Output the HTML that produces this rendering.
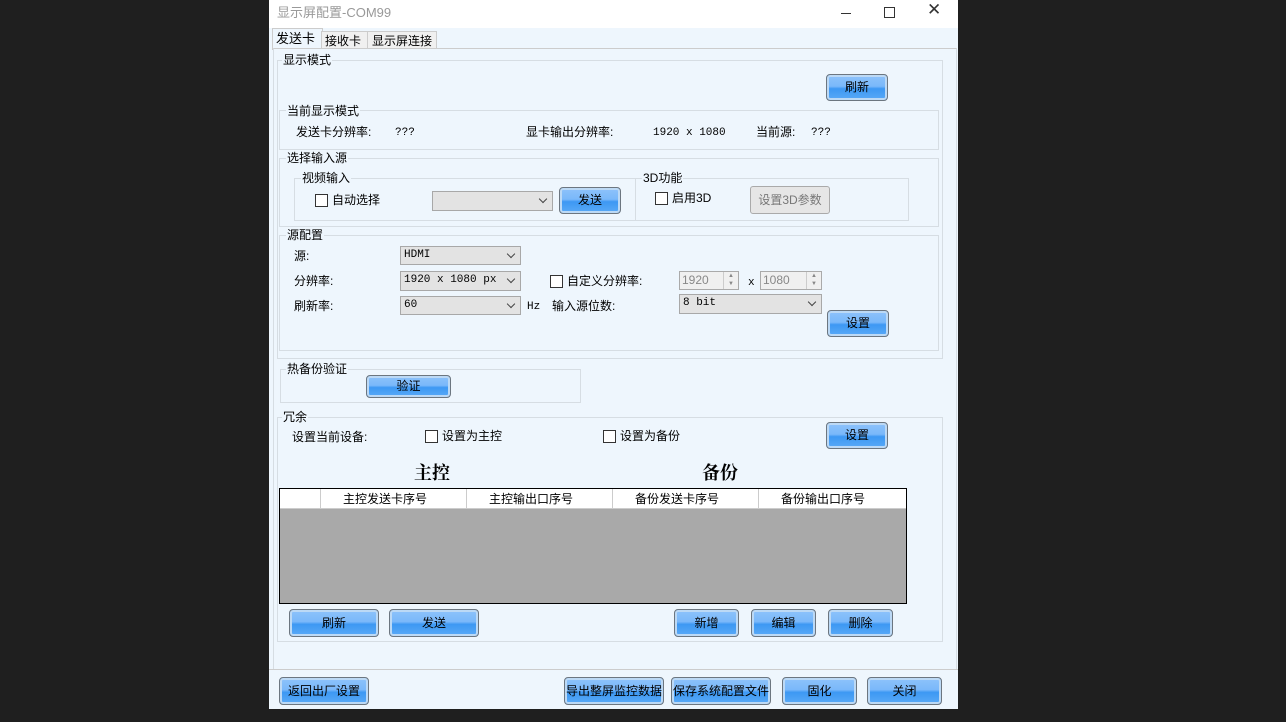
<!DOCTYPE html>
<html><head><meta charset="utf-8"><style>
body{margin:0;width:1286px;height:722px;background:#1f1f1f;position:relative;overflow:hidden;font-family:"Liberation Sans","Noto Sans CJK SC",sans-serif;font-size:12px;color:#000}
.a{position:absolute}
.win{left:269px;top:0;width:689px;height:709px;background:#eef6fd}
.title{left:0;top:0;width:689px;height:28px;background:#fff}
.g{position:absolute;border:1px solid #d6dde3}
.lg{position:absolute;background:#eef6fd;padding:0 1px;font-size:12px;line-height:14px}
.btn{position:absolute;border:1px solid #6c7680;border-radius:4px;background:linear-gradient(#8ec3fb 0%,#7ab8fa 45%,#3d98f3 55%,#5aaaf7 100%);box-shadow:inset 0 0 0 2px #bcd9f5;text-align:center;font-size:12px;box-sizing:border-box}
.cb{position:absolute;width:11px;height:11px;border:1px solid #333;background:#fff}
.sel{position:absolute;border:1px solid #a8a8a8;background:#e3e3e3;box-sizing:border-box;font-family:"Liberation Mono","Noto Sans CJK SC",monospace;font-size:11px;padding-left:3px;line-height:17px}
.sel:after{content:"";position:absolute;right:6px;top:4px;width:5px;height:5px;border-right:1px solid #444;border-bottom:1px solid #444;transform:rotate(45deg)}
.t{position:absolute;white-space:nowrap;line-height:14px}
.m{font-family:"Liberation Mono","Noto Sans CJK SC",monospace;font-size:11px}
</style></head><body>
<div class="a win">
 <div class="a title"><span class="t" style="left:8px;top:6px;color:#999;font-size:13px">显示屏配置-COM99</span>
  <div class="a" style="left:572px;top:13px;width:10px;height:1px;background:#333"></div>
  <div class="a" style="left:615px;top:7px;width:9px;height:9px;border:1px solid #333"></div>
  <span class="t" style="left:658px;top:3px;font-size:17px;color:#333">✕</span>
 </div>
 <!-- tabs -->
 <div class="a" style="left:3px;top:28px;width:49px;height:21px;background:#eef6fd;border:1px solid #ccc;border-bottom:none"></div>
 <span class="t" style="left:7px;top:32px;font-size:13px">发送卡</span>
 <div class="a" style="left:52px;top:31px;width:45px;height:17px;background:#f0f0f0;border:1px solid #ccc"></div>
 <span class="t" style="left:56px;top:34px">接收卡</span>
 <div class="a" style="left:98px;top:31px;width:68px;height:17px;background:#f0f0f0;border:1px solid #ccc"></div>
 <span class="t" style="left:103px;top:34px">显示屏连接</span>
 <div class="a" style="left:4px;top:48px;width:682px;height:620px;border:1px solid #d6dde3;border-top:1px solid #ccc;background:#eef6fd"></div>

 <!-- 显示模式 -->
 <div class="g" style="left:8px;top:60px;width:664px;height:297px"></div>
 <span class="lg" style="left:13px;top:53px">显示模式</span>
 <div class="btn" style="left:557px;top:74px;width:62px;height:27px;line-height:25px">刷新</div>
 <div class="g" style="left:10px;top:110px;width:658px;height:38px"></div>
 <span class="lg" style="left:17px;top:104px">当前显示模式</span>
 <span class="t" style="left:27px;top:125px">发送卡分辨率:</span><span class="t m" style="left:126px;top:126px">???</span>
 <span class="t" style="left:257px;top:125px">显卡输出分辨率:</span><span class="t m" style="left:384px;top:126px">1920 x 1080</span>
 <span class="t" style="left:487px;top:125px">当前源:</span><span class="t m" style="left:542px;top:126px">???</span>

 <div class="g" style="left:10px;top:158px;width:658px;height:67px"></div>
 <span class="lg" style="left:17px;top:151px">选择输入源</span>
 <div class="g" style="left:25px;top:178px;width:340px;height:41px"></div>
 <span class="lg" style="left:32px;top:171px">视频输入</span>
 <div class="cb" style="left:46px;top:194px"></div><span class="t" style="left:63px;top:193px">自动选择</span>
 <div class="sel" style="left:163px;top:191px;width:121px;height:20px"></div>
 <div class="btn" style="left:290px;top:187px;width:62px;height:27px;line-height:25px">发送</div>
 <div class="g" style="left:366px;top:178px;width:272px;height:41px"></div>
 <span class="lg" style="left:373px;top:171px">3D功能</span>
 <div class="cb" style="left:386px;top:192px"></div><span class="t" style="left:403px;top:191px">启用3D</span>
 <div class="a" style="left:481px;top:186px;width:78px;height:26px;border:1px solid #aaa;border-radius:3px;background:#e6e6e6;color:#777;text-align:center;line-height:26px">设置3D参数</div>

 <div class="g" style="left:10px;top:235px;width:658px;height:114px"></div>
 <span class="lg" style="left:17px;top:228px">源配置</span>
 <span class="t" style="left:25px;top:249px">源:</span>
 <div class="sel" style="left:131px;top:246px;width:121px;height:19px">HDMI</div>
 <span class="t" style="left:25px;top:274px">分辨率:</span>
 <div class="sel" style="left:131px;top:271px;width:121px;height:20px">1920 x 1080 px</div>
 <span class="t" style="left:25px;top:299px">刷新率:</span>
 <div class="sel" style="left:131px;top:296px;width:121px;height:19px">60</div>
 <span class="t m" style="left:258px;top:300px">Hz</span>
 <div class="cb" style="left:281px;top:275px"></div><span class="t" style="left:298px;top:274px">自定义分辨率:</span>
 <div class="a" style="left:410px;top:271px;width:60px;height:19px;border:1px solid #aaa;background:#f0f0f0;color:#888;line-height:17px;padding-left:2px;box-sizing:border-box">1920<span style="position:absolute;right:0;top:0;width:14px;height:17px;border-left:1px solid #ccc;font-size:6px;line-height:8px;text-align:center">▲<br>▼</span></div>
 <span class="t m" style="left:479px;top:276px">x</span>
 <div class="a" style="left:491px;top:271px;width:62px;height:19px;border:1px solid #aaa;background:#f0f0f0;color:#888;line-height:17px;padding-left:2px;box-sizing:border-box">1080<span style="position:absolute;right:0;top:0;width:14px;height:17px;border-left:1px solid #ccc;font-size:6px;line-height:8px;text-align:center">▲<br>▼</span></div>
 <span class="t" style="left:283px;top:299px">输入源位数:</span>
 <div class="sel" style="left:410px;top:294px;width:143px;height:20px">8 bit</div>
 <div class="btn" style="left:558px;top:310px;width:62px;height:27px;line-height:25px">设置</div>

 <div class="g" style="left:11px;top:369px;width:299px;height:32px"></div>
 <span class="lg" style="left:17px;top:362px">热备份验证</span>
 <div class="btn" style="left:97px;top:375px;width:85px;height:23px;line-height:21px">验证</div>

 <div class="g" style="left:8px;top:417px;width:664px;height:223px"></div>
 <span class="lg" style="left:13px;top:410px">冗余</span>
 <span class="t" style="left:23px;top:430px">设置当前设备:</span>
 <div class="cb" style="left:156px;top:430px"></div><span class="t" style="left:173px;top:429px">设置为主控</span>
 <div class="cb" style="left:334px;top:430px"></div><span class="t" style="left:351px;top:429px">设置为备份</span>
 <div class="btn" style="left:557px;top:422px;width:62px;height:27px;line-height:25px">设置</div>
 <span class="t" style="left:145px;top:462px;font-family:'Noto Serif CJK SC',serif;font-weight:bold;font-size:18px;line-height:20px">主控</span>
 <span class="t" style="left:433px;top:462px;font-family:'Noto Serif CJK SC',serif;font-weight:bold;font-size:18px;line-height:20px">备份</span>
 <div class="a" style="left:10px;top:488px;width:626px;height:114px;border:1px solid #000;background:#a9a9a9">
  <div class="a" style="left:0;top:0;width:626px;height:19px;background:#fff;border-bottom:1px solid #ccc"></div>
  <div class="a" style="left:40px;top:0;width:1px;height:19px;background:#ccc"></div>
  <div class="a" style="left:186px;top:0;width:1px;height:19px;background:#ccc"></div>
  <div class="a" style="left:332px;top:0;width:1px;height:19px;background:#ccc"></div>
  <div class="a" style="left:478px;top:0;width:1px;height:19px;background:#ccc"></div>
  <span class="t" style="left:63px;top:3px">主控发送卡序号</span>
  <span class="t" style="left:209px;top:3px">主控输出口序号</span>
  <span class="t" style="left:355px;top:3px">备份发送卡序号</span>
  <span class="t" style="left:501px;top:3px">备份输出口序号</span>
 </div>
 <div class="btn" style="left:20px;top:609px;width:90px;height:28px;line-height:26px">刷新</div>
 <div class="btn" style="left:120px;top:609px;width:90px;height:28px;line-height:26px">发送</div>
 <div class="btn" style="left:405px;top:609px;width:65px;height:28px;line-height:26px">新增</div>
 <div class="btn" style="left:482px;top:609px;width:65px;height:28px;line-height:26px">编辑</div>
 <div class="btn" style="left:559px;top:609px;width:65px;height:28px;line-height:26px">删除</div>

 <div class="a" style="left:0;top:669px;width:689px;height:1px;background:#ccc"></div>
 <div class="btn" style="left:10px;top:677px;width:90px;height:28px;line-height:26px">返回出厂设置</div>
 <div class="btn" style="left:295px;top:677px;width:100px;height:28px;line-height:26px">导出整屏监控数据</div>
 <div class="btn" style="left:402px;top:677px;width:100px;height:28px;line-height:26px">保存系统配置文件</div>
 <div class="btn" style="left:513px;top:677px;width:75px;height:28px;line-height:26px">固化</div>
 <div class="btn" style="left:598px;top:677px;width:75px;height:28px;line-height:26px">关闭</div>
</div>
</body></html>
